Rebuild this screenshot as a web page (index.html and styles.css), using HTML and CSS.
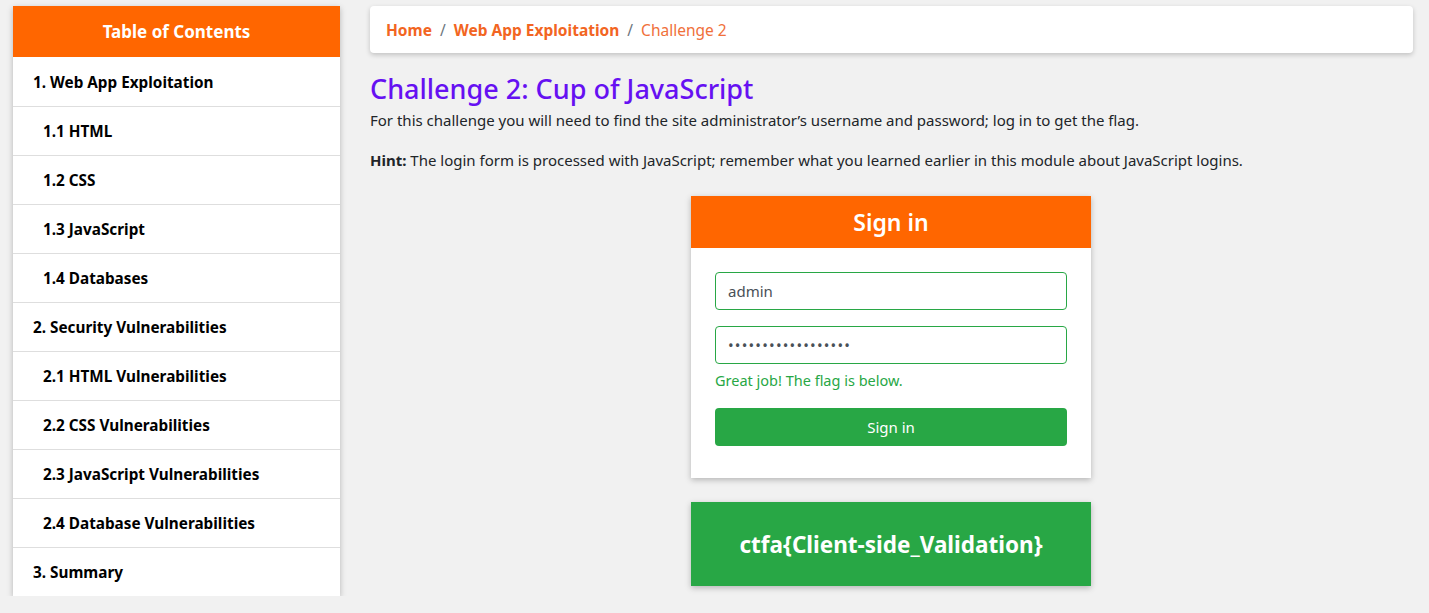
FILE: index.html
```html
<!DOCTYPE html>
<html lang="en">
<head>
<meta charset="utf-8">
<title>Challenge 2: Cup of JavaScript</title>
<link rel="stylesheet" href="styles.css">
</head>
<body>
<div class="layout">
  <nav class="toc">
    <div class="toc-head">Table of Contents</div>
    <ul class="toc-list">
      <li class="toc-item">1. Web App Exploitation</li>
      <li class="toc-item sub">1.1 HTML</li>
      <li class="toc-item sub">1.2 CSS</li>
      <li class="toc-item sub">1.3 JavaScript</li>
      <li class="toc-item sub">1.4 Databases</li>
      <li class="toc-item">2. Security Vulnerabilities</li>
      <li class="toc-item sub">2.1 HTML Vulnerabilities</li>
      <li class="toc-item sub">2.2 CSS Vulnerabilities</li>
      <li class="toc-item sub">2.3 JavaScript Vulnerabilities</li>
      <li class="toc-item sub">2.4 Database Vulnerabilities</li>
      <li class="toc-item">3. Summary</li>
    </ul>
  </nav>
  <main class="main">
    <div class="crumbs">
      <a class="crumb-link">Home</a><span class="sep">/</span><a class="crumb-link">Web App Exploitation</a><span class="sep">/</span><span class="crumb-current">Challenge 2</span>
    </div>
    <h3 class="title">Challenge 2: Cup of JavaScript</h3>
    <p class="text">For this challenge you will need to find the site administrator’s username and password; log in to get the flag.</p>
    <p class="text"><b>Hint:</b> The login form is processed with JavaScript; remember what you learned earlier in this module about JavaScript logins.</p>
    <div class="center">
      <div class="card">
        <div class="card-head">Sign in</div>
        <div class="card-body">
          <div class="field">admin</div>
          <div class="field pw">••••••••••••••••••</div>
          <div class="feedback">Great job! The flag is below.</div>
          <div class="btn">Sign in</div>
        </div>
      </div>
      <div class="flag">ctfa{Client-side_Validation}</div>
    </div>
  </main>
</div>
</body>
</html>
```

FILE: styles.css
```css
* { box-sizing: border-box; }
body {
  margin: 0;
  background: #f1f1f1;
  font-family: "Noto Sans", "Open Sans", sans-serif;
  color: #212529;
  font-size: 15px;
}
.layout {
  display: flex;
  align-items: flex-start;
  padding: 6px 16px 0 13px;
  gap: 30px;
}
.toc {
  width: 327px;
  flex: none;
  background: #fff;
  box-shadow: 0 2px 6px rgba(0,0,0,0.25);
}
.toc-head {
  background: #ff6600;
  color: #fff;
  height: 51px;
  display: flex;
  align-items: center;
  justify-content: center;
  font-weight: 700;
  font-size: 17px;
}
.toc-list { list-style: none; margin: 0; padding: 0; }
.toc-item {
  height: 49px;
  display: flex;
  align-items: center;
  padding-left: 20px;
  font-weight: 700;
  font-size: 15.3px;
  color: #000;
  border-top: 1px solid #dedede;
}
.toc-item:first-child { border-top: none; }
.toc-item.sub { padding-left: 30px; }
.main { flex: 1; min-width: 0; }
.crumbs {
  background: #fff;
  height: 47px;
  border-radius: 4px;
  box-shadow: 0 2px 5px rgba(0,0,0,0.2);
  display: flex;
  align-items: center;
  padding-left: 16px;
  font-size: 15.5px;
}
.crumb-link { color: #f26522; font-weight: 700; }
.crumb-current { color: #f0703a; }
.sep { color: #6c757d; padding: 0 8px; }
.title {
  color: #6610f2;
  font-size: 27px;
  font-weight: 500;
  margin: 19px 0 2px;
  line-height: 34px;
}
.text { margin: 0 0 16px; line-height: 24px; font-size: 15px; }
.center { display: flex; flex-direction: column; align-items: center; padding: 8px 1px 0 0; }
.card {
  width: 400px;
  background: #fff;
  box-shadow: 0 2px 6px rgba(0,0,0,0.25);
}
.card-head {
  background: #ff6600;
  color: #fff;
  height: 52px;
  display: flex;
  align-items: center;
  justify-content: center;
  font-size: 23px;
  font-weight: 600;
}
.card-body { padding: 24px 24px 32px; }
.field {
  height: 38px;
  border: 1px solid #28a745;
  border-radius: 4px;
  display: flex;
  align-items: center;
  padding-left: 12px;
  color: #495057;
  font-size: 15px;
  margin-bottom: 16px;
}
.field.pw { margin-bottom: 0; letter-spacing: 1.2px; font-size: 15px; }
.feedback { color: #28a745; font-size: 14.5px; margin: 4px 0 16px; line-height: 24px; }
.btn {
  height: 38px;
  background: #28a745;
  color: #fff;
  border-radius: 4px;
  display: flex;
  align-items: center;
  justify-content: center;
  font-size: 15px;
}
.flag {
  width: 400px;
  height: 84px;
  margin-top: 24px;
  background: #28a745;
  color: #fff;
  font-weight: 700;
  font-size: 22.5px;
  display: flex;
  align-items: center;
  justify-content: center;
  box-shadow: 0 2px 6px rgba(0,0,0,0.25);
}
```
